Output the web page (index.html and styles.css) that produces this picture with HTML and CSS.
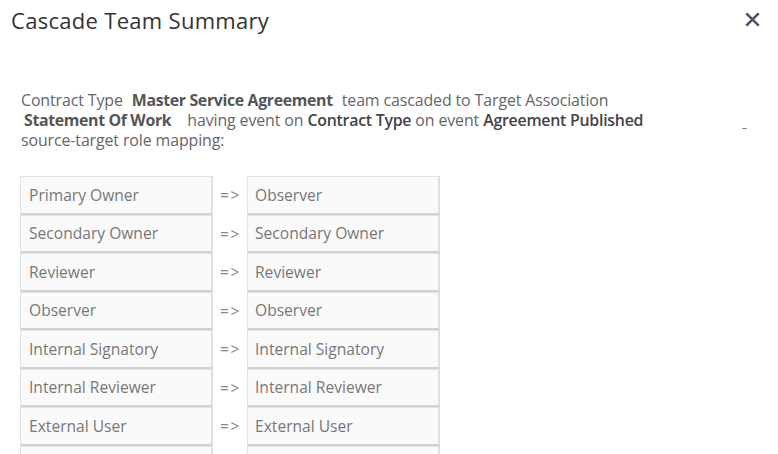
FILE: index.html
```html
<!DOCTYPE html>
<html>
<head>
<meta charset="utf-8">
<link rel="stylesheet" href="styles.css">
</head>
<body>
<div class="dialog">
  <header class="header">
    <h1 class="title">Cascade Team Summary</h1>
    <button class="close" aria-label="Close">
      <svg width="17" height="17" viewBox="0 0 16 16"><path d="M2.2 2.2 L13.8 13.8 M13.8 2.2 L2.2 13.8" stroke="#4d5566" stroke-width="2.5" stroke-linecap="butt"/></svg>
    </button>
  </header>
  <div class="content">
    <p class="summary">
      <span class="line">Contract Type <b class="strong">Master Service Agreement</b> team cascaded to Target Association</span>
      <span class="line line-2"><b class="strong">Statement Of Work</b> <span class="gap">having event on <b class="semi">Contract Type</b> on event <b class="semi">Agreement Published</b></span><span class="dash"></span></span>
      <span class="line">source-target role mapping:</span>
    </p>
    <div class="mapping">
      <div class="cell">Primary Owner</div><div class="arrow">=&gt;</div><div class="cell">Observer</div>
      <div class="cell">Secondary Owner</div><div class="arrow">=&gt;</div><div class="cell">Secondary Owner</div>
      <div class="cell">Reviewer</div><div class="arrow">=&gt;</div><div class="cell">Reviewer</div>
      <div class="cell">Observer</div><div class="arrow">=&gt;</div><div class="cell">Observer</div>
      <div class="cell">Internal Signatory</div><div class="arrow">=&gt;</div><div class="cell">Internal Signatory</div>
      <div class="cell">Internal Reviewer</div><div class="arrow">=&gt;</div><div class="cell">Internal Reviewer</div>
      <div class="cell">External User</div><div class="arrow">=&gt;</div><div class="cell">External User</div>
      <div class="cell"></div><div class="arrow"></div><div class="cell"></div>
    </div>
  </div>
</div>
</body>
</html>
```
FILE: styles.css
```css
html, body {
  margin: 0;
  padding: 0;
  background: #ffffff;
  overflow: hidden;
}
body {
  width: 778px;
  height: 454px;
  font-family: "Open Sans", "Noto Sans", sans-serif;
}
.dialog {
  display: flex;
  flex-direction: column;
}
.header {
  display: flex;
  justify-content: space-between;
  align-items: flex-start;
  padding: 5px 17px 0 11px;
  height: 50px;
  box-sizing: border-box;
}
.title {
  margin: 0;
  font-weight: 400;
  font-size: 22px;
  line-height: 30px;
  color: #333333;
  letter-spacing: 0.3px;
}
.close {
  border: 0;
  background: none;
  padding: 0;
  margin-top: 5px;
  width: 18px;
  height: 18px;
  display: flex;
  align-items: center;
  justify-content: center;
}
.content {
  padding: 40px 0 0 20px;
}
.summary {
  margin: 0;
  font-size: 15.9px;
  line-height: 20px;
  color: #666666;
  display: flex;
  flex-direction: column;
  letter-spacing: -0.1px;
}
.line {
  display: block;
  white-space: nowrap;
  padding-left: 1px;
}
.line-2 {
  padding-left: 4px;
  position: relative;
}
.strong {
  font-weight: 700;
  color: #555555;
  margin: 0 5px 0 5px;
  letter-spacing: -0.35px;
}
.line-2 .strong {
  margin: 0 12px 0 0;
}
.semi {
  font-weight: 600;
  color: #444444;
  letter-spacing: -0.25px;
}
.dash {
  position: absolute;
  left: 722px;
  top: 18px;
  width: 5px;
  height: 1px;
  background: #888888;
}
.mapping {
  margin-top: 26px;
  display: grid;
  grid-template-columns: 193px 34px 193px;
  grid-auto-rows: 38.5px;
  font-size: 15.6px;
  color: #777777;
}
.cell {
  box-sizing: border-box;
  background: #fafafa;
  border: 1px solid #e2e2e2;
  border-right: 2px solid #e0e0e0;
  border-bottom: 2px solid #d2d2d2;
  padding: 0 8px;
  display: flex;
  align-items: center;
  white-space: nowrap;
}
.cell + .arrow + .cell {
  padding-left: 7px;
}
.arrow {
  display: flex;
  align-items: center;
  padding-left: 7px;
  color: #888888;
  letter-spacing: 1.5px;
}
```
